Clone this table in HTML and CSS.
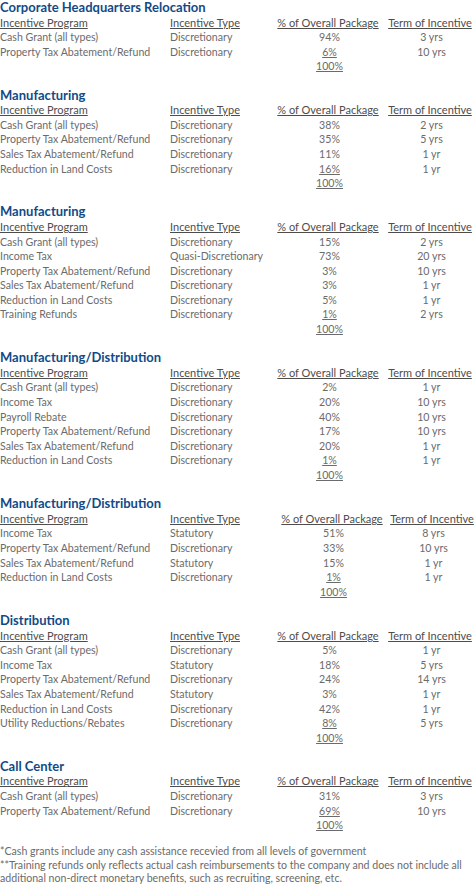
FILE: index.html
```html
<!DOCTYPE html>
<html lang="en">
<head>
<meta charset="utf-8">
<title>Incentive Packages</title>
<link rel="stylesheet" href="styles.css">
</head>
<body>
<main class="page">

<section class="pkg">
  <h2 class="pkg-title">Corporate Headquarters Relocation</h2>
  <div class="row head"><span>Incentive Program</span><span>Incentive Type</span><span>% of Overall Package</span><span>Term of Incentive</span></div>
  <div class="row"><span>Cash Grant (all types)</span><span>Discretionary</span><span class="num">94%</span><span class="num">3 yrs</span></div>
  <div class="row"><span>Property Tax Abatement/Refund</span><span>Discretionary</span><span class="num"><u>6%</u></span><span class="num">10 yrs</span></div>
  <div class="row total"><span></span><span></span><span class="num"><u>100%</u></span><span></span></div>
</section>

<section class="pkg">
  <h2 class="pkg-title">Manufacturing</h2>
  <div class="row head"><span>Incentive Program</span><span>Incentive Type</span><span>% of Overall Package</span><span>Term of Incentive</span></div>
  <div class="row"><span>Cash Grant (all types)</span><span>Discretionary</span><span class="num">38%</span><span class="num">2 yrs</span></div>
  <div class="row"><span>Property Tax Abatement/Refund</span><span>Discretionary</span><span class="num">35%</span><span class="num">5 yrs</span></div>
  <div class="row"><span>Sales Tax Abatement/Refund</span><span>Discretionary</span><span class="num">11%</span><span class="num">1 yr</span></div>
  <div class="row"><span>Reduction in Land Costs</span><span>Discretionary</span><span class="num"><u>16%</u></span><span class="num">1 yr</span></div>
  <div class="row total"><span></span><span></span><span class="num"><u>100%</u></span><span></span></div>
</section>

<section class="pkg">
  <h2 class="pkg-title">Manufacturing</h2>
  <div class="row head"><span>Incentive Program</span><span>Incentive Type</span><span>% of Overall Package</span><span>Term of Incentive</span></div>
  <div class="row"><span>Cash Grant (all types)</span><span>Discretionary</span><span class="num">15%</span><span class="num">2 yrs</span></div>
  <div class="row"><span>Income Tax</span><span>Quasi-Discretionary</span><span class="num">73%</span><span class="num">20 yrs</span></div>
  <div class="row"><span>Property Tax Abatement/Refund</span><span>Discretionary</span><span class="num">3%</span><span class="num">10 yrs</span></div>
  <div class="row"><span>Sales Tax Abatement/Refund</span><span>Discretionary</span><span class="num">3%</span><span class="num">1 yr</span></div>
  <div class="row"><span>Reduction in Land Costs</span><span>Discretionary</span><span class="num">5%</span><span class="num">1 yr</span></div>
  <div class="row"><span>Training Refunds</span><span>Discretionary</span><span class="num"><u>1%</u></span><span class="num">2 yrs</span></div>
  <div class="row total"><span></span><span></span><span class="num"><u>100%</u></span><span></span></div>
</section>

<section class="pkg">
  <h2 class="pkg-title">Manufacturing/Distribution</h2>
  <div class="row head"><span>Incentive Program</span><span>Incentive Type</span><span>% of Overall Package</span><span>Term of Incentive</span></div>
  <div class="row"><span>Cash Grant (all types)</span><span>Discretionary</span><span class="num">2%</span><span class="num">1 yr</span></div>
  <div class="row"><span>Income Tax</span><span>Discretionary</span><span class="num">20%</span><span class="num">10 yrs</span></div>
  <div class="row"><span>Payroll Rebate</span><span>Discretionary</span><span class="num">40%</span><span class="num">10 yrs</span></div>
  <div class="row"><span>Property Tax Abatement/Refund</span><span>Discretionary</span><span class="num">17%</span><span class="num">10 yrs</span></div>
  <div class="row"><span>Sales Tax Abatement/Refund</span><span>Discretionary</span><span class="num">20%</span><span class="num">1 yr</span></div>
  <div class="row"><span>Reduction in Land Costs</span><span>Discretionary</span><span class="num"><u>1%</u></span><span class="num">1 yr</span></div>
  <div class="row total"><span></span><span></span><span class="num"><u>100%</u></span><span></span></div>
</section>

<section class="pkg pkg-shift">
  <h2 class="pkg-title">Manufacturing/Distribution</h2>
  <div class="row head"><span>Incentive Program</span><span>Incentive Type</span><span>% of Overall Package</span><span>Term of Incentive</span></div>
  <div class="row"><span>Income Tax</span><span>Statutory</span><span class="num">51%</span><span class="num">8 yrs</span></div>
  <div class="row"><span>Property Tax Abatement/Refund</span><span>Discretionary</span><span class="num">33%</span><span class="num">10 yrs</span></div>
  <div class="row"><span>Sales Tax Abatement/Refund</span><span>Statutory</span><span class="num">15%</span><span class="num">1 yr</span></div>
  <div class="row"><span>Reduction in Land Costs</span><span>Discretionary</span><span class="num"><u>1%</u></span><span class="num">1 yr</span></div>
  <div class="row total"><span></span><span></span><span class="num"><u>100%</u></span><span></span></div>
</section>

<section class="pkg">
  <h2 class="pkg-title">Distribution</h2>
  <div class="row head"><span>Incentive Program</span><span>Incentive Type</span><span>% of Overall Package</span><span>Term of Incentive</span></div>
  <div class="row"><span>Cash Grant (all types)</span><span>Discretionary</span><span class="num">5%</span><span class="num">1 yr</span></div>
  <div class="row"><span>Income Tax</span><span>Statutory</span><span class="num">18%</span><span class="num">5 yrs</span></div>
  <div class="row"><span>Property Tax Abatement/Refund</span><span>Discretionary</span><span class="num">24%</span><span class="num">14 yrs</span></div>
  <div class="row"><span>Sales Tax Abatement/Refund</span><span>Statutory</span><span class="num">3%</span><span class="num">1 yr</span></div>
  <div class="row"><span>Reduction in Land Costs</span><span>Discretionary</span><span class="num">42%</span><span class="num">1 yr</span></div>
  <div class="row"><span>Utility Reductions/Rebates</span><span>Discretionary</span><span class="num"><u>8%</u></span><span class="num">5 yrs</span></div>
  <div class="row total"><span></span><span></span><span class="num"><u>100%</u></span><span></span></div>
</section>

<section class="pkg">
  <h2 class="pkg-title">Call Center</h2>
  <div class="row head"><span>Incentive Program</span><span>Incentive Type</span><span>% of Overall Package</span><span>Term of Incentive</span></div>
  <div class="row"><span>Cash Grant (all types)</span><span>Discretionary</span><span class="num">31%</span><span class="num">3 yrs</span></div>
  <div class="row"><span>Property Tax Abatement/Refund</span><span>Discretionary</span><span class="num"><u>69%</u></span><span class="num">10 yrs</span></div>
  <div class="row total"><span></span><span></span><span class="num"><u>100%</u></span><span></span></div>
</section>

<footer class="notes">
  <p>*Cash grants include any cash assistance recevied from all levels of government</p>
  <p>**Training refunds only reflects actual cash reimbursements to the company and does not include all additional non-direct monetary benefits, such as recruiting, screening, etc.</p>
</footer>

</main>
</body>
</html>
```

FILE: styles.css
```css
html, body {
  margin: 0;
  padding: 0;
  background: #ffffff;
}

body {
  font-family: "Lato", "Noto Sans", sans-serif;
  font-size: 10.6px;
  line-height: 14.6px;
  color: #6b6b6b;
}

.page {
  width: 474px;
  padding-top: 1px;
}

.pkg {
  margin-bottom: 14.6px;
}

.pkg-title {
  margin: 0;
  font-size: 13px;
  line-height: 13.6px;
  padding-bottom: 1px;
  font-weight: 700;
  color: #124a87;
  white-space: nowrap;
}

.row {
  display: grid;
  grid-template-columns: 170px 100px 116px 88px;
  height: 14.6px;
  white-space: nowrap;
}

.pkg-shift .row {
  grid-template-columns: 170px 104px 116px 84px;
}

.row.head {
  font-size: 11px;
  color: #4d4d4d;
}

.row.head span {
  text-decoration: underline;
  text-underline-offset: 1px;
}

.row.head span:nth-child(3),
.row.head span:nth-child(4) {
  text-align: center;
}

.num {
  text-align: center;
  padding-left: 3px;
}

u {
  text-decoration: underline;
  text-underline-offset: 1px;
}

.notes {
  margin-top: -2px;
  line-height: 13.2px;
}

.notes p {
  margin: 0;
  width: 474px;
}
```
